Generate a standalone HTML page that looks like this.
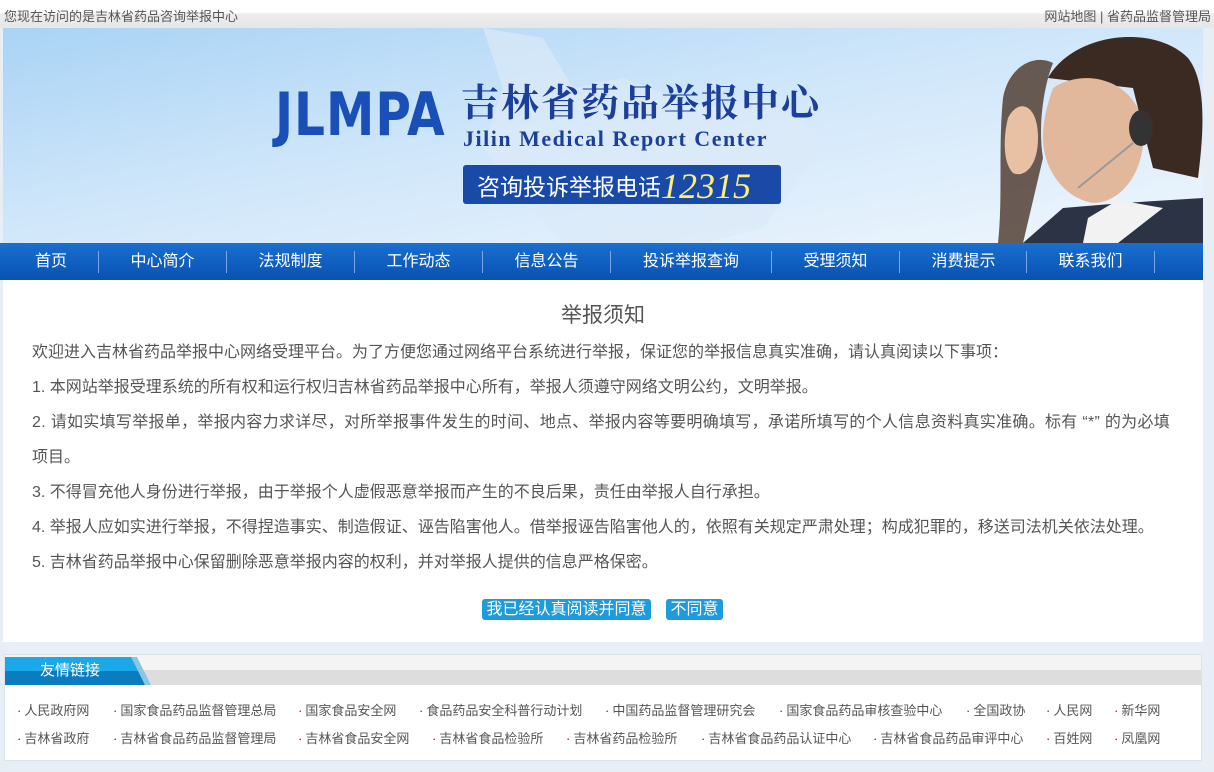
<!DOCTYPE html>
<html><head><meta charset="utf-8"><style>
*{margin:0;padding:0;box-sizing:border-box}
body{width:1214px;height:772px;overflow:hidden;background:#e8eef5;font-family:"Liberation Sans","Microsoft YaHei","Noto Sans CJK SC",sans-serif;position:relative}
.abs{position:absolute}
#top{left:0;top:0;width:1214px;height:28px;background:linear-gradient(#fff 0,#fff 12px,#eee 14px,#e6e6e6 28px);font-size:13px;color:#555}
#banner{left:3px;top:28px;width:1200px;height:215px;background:linear-gradient(170deg,#a9d3f5 0%,#cfe6fa 45%,#eef6fd 100%);overflow:hidden}
#nav{left:0;top:243px;width:1203px;height:37px;background:linear-gradient(#1a6fcf 0,#0f5fc0 55%,#0a52b0 100%)}
#nav span{position:absolute;top:0;line-height:38px;color:#fff;font-size:16px;text-align:center}
#nav i{position:absolute;top:8px;width:1px;height:22px;background:#7aa8e0}
#main{left:3px;top:280px;width:1200px;height:362px;background:#fff}
#main p{position:absolute;left:29px;font-size:16px;color:#555;white-space:nowrap}
.btn{position:absolute;top:599px;height:21px;background:#1d9bdc;color:#fff;font-size:16px;line-height:21px;border-radius:3px;text-align:center}
#links{left:4px;top:654px;width:1198px;height:107px;background:#fff;border:1px solid #dde3ea}
#links .bar{position:absolute;left:0;top:0;width:1196px;height:30px;background:linear-gradient(#f4f4f4 0,#f4f4f4 15px,#ddd 15px,#ddd 30px)}
#links .tab{position:absolute;left:0;top:2px;width:140px;height:28px;background:linear-gradient(#1aa8e8 0,#1aa8e8 14px,#0b7cc0 14px);clip-path:polygon(0 0,128px 0,140px 28px,0 28px)}
#links .tab2{position:absolute;left:126px;top:2px;width:20px;height:28px;background:#8ac6e4;clip-path:polygon(0 0,6px 0,20px 28px,14px 28px)}
#links .tt{position:absolute;left:35px;top:2px;line-height:28px;color:#fff;font-size:15px}
.l{position:absolute;font-size:13px;color:#555;white-space:nowrap}
.l:before{content:"·";color:#c00;margin-right:3px}
</style></head><body>
<div id="top" class="abs"><span class="abs" style="left:4px;top:6px">您现在访问的是吉林省药品咨询举报中心</span><span class="abs" style="right:3px;top:6px">网站地图 | 省药品监督管理局</span></div>
<div id="banner" class="abs">
<svg class="abs" style="left:0;top:0" width="1200" height="215"><path d="M480 0 L540 10 L570 60 L620 50 L700 80 L760 70 L820 110 L790 160 L760 200 L700 215 L560 215 L520 170 L480 120 L500 60Z" fill="#dbeaf8" opacity=".7"/>
<path d="M1000 70 C1005 40 1030 25 1050 35 C1040 60 1035 100 1040 130 L1020 215 L995 215 C1000 170 995 120 1000 70Z" fill="#4a3528" opacity=".8"/>
<path d="M1005 90 C1015 70 1035 75 1035 110 C1035 140 1020 150 1010 145 C1000 135 1000 110 1005 90Z" fill="#e8c0a4"/>
<path d="M1045 50 C1070 5 1150 -5 1185 30 C1205 55 1200 110 1195 150 L1150 140 L1130 60Z" fill="#3a2a22"/>
<path d="M1050 60 C1080 40 1130 50 1140 95 C1145 140 1120 175 1090 175 C1060 170 1040 140 1040 110 C1040 90 1045 75 1050 60Z" fill="#e2b89c"/>
<path d="M1020 215 L1060 180 L1120 175 L1200 170 L1200 215Z" fill="#2c3345"/>
<path d="M1085 190 L1115 172 L1160 180 L1115 215 L1080 215Z" fill="#f2f2f2"/>
<ellipse cx="1138" cy="100" rx="12" ry="18" fill="#333"/>
<path d="M1130 115 L1075 160" stroke="#999" stroke-width="2"/></svg>
<div class="abs" style="left:272px;top:55px;font:bold 54px 'DejaVu Sans Condensed','Liberation Sans',sans-serif;color:#1a4fb8;letter-spacing:1px;transform:scaleY(1.1)">JLMPA</div>
<div class="abs" style="left:458px;top:44px;font:bold 38px 'Noto Serif CJK SC',serif;color:#1b3f9a;letter-spacing:2px">吉林省药品举报中心</div>
<div class="abs" style="left:460px;top:98px;font:bold 22px 'Liberation Serif',serif;color:#1b3f9a;letter-spacing:1.5px">Jilin Medical Report Center</div>
<div class="abs" style="left:460px;top:137px;width:318px;height:39px;background:#1a4aa8;border-radius:3px;color:#fff;font-size:23px;line-height:39px;padding-left:14px">咨询投诉举报电话<span style="font:italic 36px 'Liberation Serif',serif;color:#ffef7a;vertical-align:-3px">12315</span></div>
</div>
<div id="nav" class="abs">
<span style="left:20px;width:62px">首页</span><i style="left:98px"></i>
<span style="left:115px;width:95px">中心简介</span><i style="left:226px"></i>
<span style="left:243px;width:95px">法规制度</span><i style="left:354px"></i>
<span style="left:371px;width:95px">工作动态</span><i style="left:482px"></i>
<span style="left:499px;width:95px">信息公告</span><i style="left:610px"></i>
<span style="left:627px;width:128px">投诉举报查询</span><i style="left:771px"></i>
<span style="left:788px;width:95px">受理须知</span><i style="left:899px"></i>
<span style="left:916px;width:95px">消费提示</span><i style="left:1026px"></i>
<span style="left:1043px;width:95px">联系我们</span><i style="left:1154px"></i>
</div>
<div id="main" class="abs">
<div class="abs" style="left:0;width:1200px;top:19px;text-align:center;font-size:21px;color:#555">举报须知</div>
<p style="top:58px">欢迎进入吉林省药品举报中心网络受理平台。为了方便您通过网络平台系统进行举报，保证您的举报信息真实准确，请认真阅读以下事项：</p>
<p style="top:93px">1. 本网站举报受理系统的所有权和运行权归吉林省药品举报中心所有，举报人须遵守网络文明公约，文明举报。</p>
<p style="top:128px;letter-spacing:0.3px">2. 请如实填写举报单，举报内容力求详尽，对所举报事件发生的时间、地点、举报内容等要明确填写，承诺所填写的个人信息资料真实准确。标有 “*” 的为必填</p>
<p style="top:163px">项目。</p>
<p style="top:198px">3. 不得冒充他人身份进行举报，由于举报个人虚假恶意举报而产生的不良后果，责任由举报人自行承担。</p>
<p style="top:233px">4. 举报人应如实进行举报，不得捏造事实、制造假证、诬告陷害他人。借举报诬告陷害他人的，依照有关规定严肃处理；构成犯罪的，移送司法机关依法处理。</p>
<p style="top:268px">5. 吉林省药品举报中心保留删除恶意举报内容的权利，并对举报人提供的信息严格保密。</p>
</div>
<div class="btn" style="left:482px;width:169px">我已经认真阅读并同意</div>
<div class="btn" style="left:666px;width:57px">不同意</div>
<div id="links" class="abs"><div class="bar"></div><div class="tab"></div><div class="tab2"></div><div class="tt">友情链接</div></div>
<div class="l" style="left:17px;top:700px">人民政府网</div>
<div class="l" style="left:113px;top:700px">国家食品药品监督管理总局</div>
<div class="l" style="left:298px;top:700px">国家食品安全网</div>
<div class="l" style="left:419px;top:700px">食品药品安全科普行动计划</div>
<div class="l" style="left:605px;top:700px">中国药品监督管理研究会</div>
<div class="l" style="left:779px;top:700px">国家食品药品审核查验中心</div>
<div class="l" style="left:966px;top:700px">全国政协</div>
<div class="l" style="left:1046px;top:700px">人民网</div>
<div class="l" style="left:1114px;top:700px">新华网</div>
<div class="l" style="left:17px;top:728px">吉林省政府</div>
<div class="l" style="left:113px;top:728px">吉林省食品药品监督管理局</div>
<div class="l" style="left:298px;top:728px">吉林省食品安全网</div>
<div class="l" style="left:432px;top:728px">吉林省食品检验所</div>
<div class="l" style="left:566px;top:728px">吉林省药品检验所</div>
<div class="l" style="left:701px;top:728px">吉林省食品药品认证中心</div>
<div class="l" style="left:873px;top:728px">吉林省食品药品审评中心</div>
<div class="l" style="left:1046px;top:728px">百姓网</div>
<div class="l" style="left:1114px;top:728px">凤凰网</div>
</body></html>
